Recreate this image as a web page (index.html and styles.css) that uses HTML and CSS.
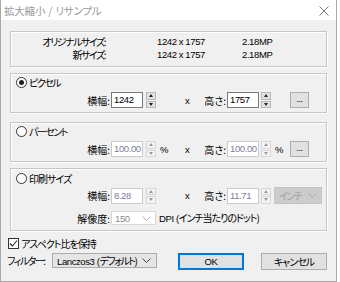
FILE: index.html
```html
<!DOCTYPE html>
<html lang="ja">
<head>
<meta charset="utf-8">
<link rel="stylesheet" href="styles.css">
</head>
<body>
<div class="window">
  <div class="titlebar">
    <span class="title">拡大縮小 / リサンプル</span>
    <svg class="close" width="10" height="10" viewBox="0 0 10 10"><path d="M0.5 0.5L9.5 9.5M9.5 0.5L0.5 9.5" stroke="#777" stroke-width="1"/></svg>
  </div>
  <div class="content">
    <div class="box info">
      <div class="info-row"><span class="info-label k">オリジナルサイズ:</span><span class="info-val n">1242 x 1757</span><span class="info-mp n">2.18MP</span></div>
      <div class="info-row"><span class="info-label k">新サイズ:</span><span class="info-val n">1242 x 1757</span><span class="info-mp n">2.18MP</span></div>
    </div>

    <div class="box group">
      <div class="radio-row"><span class="radio checked"></span><span class="k">ピクセル</span></div>
      <div class="grid-row">
        <span class="lbl">横幅:</span>
        <span class="input n">1242</span>
        <span class="spin"><i class="up"></i><i class="down"></i></span>
        <span class="unit"></span>
        <span class="xmark n">x</span>
        <span class="lbl2">高さ:</span>
        <span class="input n">1757</span>
        <span class="spin spin2"><i class="up"></i><i class="down"></i></span>
        <span class="unit2"></span>
        <span class="dots n">...</span>
      </div>
    </div>

    <div class="box group">
      <div class="radio-row"><span class="radio"></span><span class="k">パーセント</span></div>
      <div class="grid-row">
        <span class="lbl">横幅:</span>
        <span class="input n dis">100.00</span>
        <span class="spin dis"><i class="up"></i><i class="down"></i></span>
        <span class="unit n">%</span>
        <span class="xmark n">x</span>
        <span class="lbl2">高さ:</span>
        <span class="input n dis">100.00</span>
        <span class="spin spin2 dis"><i class="up"></i><i class="down"></i></span>
        <span class="unit2 n">%</span>
        <span class="dots n">...</span>
      </div>
    </div>

    <div class="box group print">
      <div class="radio-row tall"><span class="radio"></span><span class="m">印刷サイズ</span></div>
      <div class="grid-row">
        <span class="lbl">横幅:</span>
        <span class="input n dis">8.28</span>
        <span class="spin dis"><i class="up"></i><i class="down"></i></span>
        <span class="unit"></span>
        <span class="xmark n">x</span>
        <span class="lbl2">高さ:</span>
        <span class="input n dis">11.71</span>
        <span class="spin spin2 dis"><i class="up"></i><i class="down"></i></span>
        <span class="select unitsel"><span class="k">インチ</span><svg width="9" height="5" viewBox="0 0 9 5"><path d="M0.5 0.5L4.5 4.5L8.5 0.5" fill="none" stroke="#a8a8a8"/></svg></span>
      </div>
      <div class="grid-row row2">
        <span class="lbl">解像度:</span>
        <span class="select dpisel"><span class="n">150</span><svg width="9" height="5" viewBox="0 0 9 5"><path d="M0.5 0.5L4.5 4.5L8.5 0.5" fill="none" stroke="#b0b0b0"/></svg></span>
        <span class="dpitext"><span class="n">DPI (</span><span class="m">インチ当たりのドット)</span></span>
      </div>
    </div>

    <div class="check-row"><span class="checkbox"><svg width="9" height="9" viewBox="0 0 9 9"><path d="M1 4.5L3.5 7L8 1.5" fill="none" stroke="#222" stroke-width="1.1"/></svg></span><span class="m">アスペクト比を保持</span></div>

    <div class="bottom-row">
      <span class="filter-label k">フィルター:</span>
      <span class="select filtersel"><span class="fs"><span class="n">Lanczos3 (</span><span class="k">デフォルト)</span></span><svg width="9" height="5" viewBox="0 0 9 5"><path d="M0.5 0.5L4.5 4.5L8.5 0.5" fill="none" stroke="#444"/></svg></span>
      <span class="button ok n">OK</span>
      <span class="button cancel"><span class="m">キャンセル</span></span>
    </div>
  </div>
</div>
</body>
</html>
```
FILE: styles.css
```css
* { box-sizing: border-box; }
html, body { margin: 0; padding: 0; background: #ffffff; }
body {
  font-family: "Noto Sans CJK JP", sans-serif;
  font-size: 10px;
  line-height: 13px;
  font-feature-settings: "palt";
  color: #000;
  width: 340px;
  height: 282px;
  overflow: hidden;
}
.n {
  font-family: "Liberation Sans", Arial, sans-serif;
  font-size: 9.5px;
  letter-spacing: -0.4px;
}
.k { letter-spacing: -1.5px; }
.m { letter-spacing: -1px; }
.window {
  width: 337px;
  height: 282px;
  border-left: 1px solid #a9a9a9;
  border-right: 1px solid #a9a9a9;
  border-bottom: 1px solid #a9a9a9;
  background: #f0f0f0;
  display: flex;
  flex-direction: column;
}
.titlebar {
  height: 20px;
  background: #fff;
  display: flex;
  align-items: center;
  justify-content: space-between;
  padding: 0 7px 0 3px;
}
.title { color: #9a9a9a; font-size: 10.5px; letter-spacing: -0.2px; word-spacing: 1px; }
.close { display: block; margin-top: 2px; }
.content {
  padding: 11px 8px 0 9px;
  display: flex;
  flex-direction: column;
}
.box {
  width: 317px;
  border: 1px solid #c6c6c6;
  box-shadow: inset 1px 1px 0 #fff, 1px 1px 0 #fff;
}
.info {
  height: 36px;
  padding-top: 3px;
}
.info-row {
  height: 13px;
  line-height: 12px;
  display: grid;
  grid-template-columns: 94px 137px 1fr;
  align-items: center;
  white-space: nowrap;
}
.info-label { text-align: right; }
.info-val { padding-left: 52px; }
.group {
  margin-top: 6px;
  height: 40px;
}
.group + .group { margin-top: 9px; }
.group.print { margin-top: 6px; height: 63px; }
.radio-row {
  height: 16px;
  display: flex;
  align-items: center;
  padding-left: 5px;
  gap: 2px;
}
.radio-row.tall { height: 18px; }
.radio {
  width: 11px;
  height: 11px;
  border: 1px solid #333;
  border-radius: 50%;
  background: #fff;
  display: flex;
  align-items: center;
  justify-content: center;
}
.radio.checked::after {
  content: "";
  width: 5px;
  height: 5px;
  border-radius: 50%;
  background: #222;
}
.grid-row {
  margin-top: 2px;
  height: 16px;
  display: grid;
  grid-template-columns: 100px 32px 13px 29px 9px 33px 32px 12px 19px 19px 1fr;
  align-items: center;
  white-space: nowrap;
}
.print .grid-row { margin-top: 0; }
.print .row2 { margin-top: 8px; height: 14px; }
.lbl, .lbl2 { text-align: right; padding-right: 1px; }
.input {
  height: 16px;
  border: 1px solid #7a7a7a;
  background: #fff;
  padding-left: 2px;
  line-height: 14px;
  overflow: hidden;
  white-space: nowrap;
}
.input.dis { border-color: #cccccc; color: #7d7d9a; }
.spin {
  margin-left: 3px;
  width: 10px;
  height: 16px;
  display: flex;
  flex-direction: column;
  gap: 1px;
}
.spin2 { margin-left: 2px; }
.spin i {
  flex: 1;
  background: #e1e1e1;
  border: 1px solid #b9b9b9;
  display: flex;
  align-items: center;
  justify-content: center;
}
.spin i::after {
  content: "";
  width: 0; height: 0;
  border-left: 2.5px solid transparent;
  border-right: 2.5px solid transparent;
}
.spin .up::after { border-bottom: 3px solid #222; }
.spin .down::after { border-top: 3px solid #222; }
.spin.dis i { background: #f4f4f4; border-color: #d6d6d6; }
.spin.dis .up::after { border-bottom-color: #9a9a9a; }
.spin.dis .down::after { border-top-color: #9a9a9a; }
.unit { padding-left: 4px; }
.unit2 { padding-left: 4px; }
.xmark { text-align: left; }
.dots {
  height: 16px;
  background: #e1e1e1;
  border: 1px solid #adadad;
  text-align: center;
  line-height: 12px;
}
.select {
  display: flex;
  align-items: center;
  justify-content: space-between;
  padding: 0 4px 0 4px;
  white-space: nowrap;
}
.select svg { display: block; flex: none; }
.unitsel {
  grid-column: 9 / 12;
  margin-left: 3px;
  width: 48px;
  height: 17px;
  background: #cccccc;
  border: 1px solid #c4c4c4;
  color: #a3a3a3;
}
.dpisel {
  grid-column: 2 / 4;
  width: 45px;
  height: 14px;
  background: #fff;
  border: 1px solid #d9d9d9;
  color: #8a8a8a;
  padding-left: 3px;
}
.dpitext {
  grid-column: 4 / 12;
  padding-left: 3px;
  white-space: nowrap;
}
.check-row {
  margin-top: 5px;
  margin-left: -2px;
  height: 14px;
  display: flex;
  align-items: center;
  gap: 2px;
}
.checkbox {
  width: 11px;
  height: 11px;
  border: 1px solid #333;
  background: #fff;
  display: flex;
  align-items: center;
  justify-content: center;
}
.checkbox svg { display: block; }
.bottom-row {
  margin-top: 3px;
  margin-left: -3px;
  height: 17px;
  display: flex;
  align-items: flex-start;
  white-space: nowrap;
}
.filter-label { width: 45px; line-height: 15px; }
.filtersel {
  width: 105px;
  height: 15px;
  background: #e5e5e5;
  border: 1px solid #acacac;
  padding: 0 5px 0 4px;
}
.button {
  width: 66px;
  height: 17px;
  background: #e1e1e1;
  border: 1px solid #adadad;
  display: flex;
  align-items: center;
  justify-content: center;
}
.ok { margin-left: 21px; border: 2px solid #0078d7; }
.cancel { margin-left: 17px; }
```
